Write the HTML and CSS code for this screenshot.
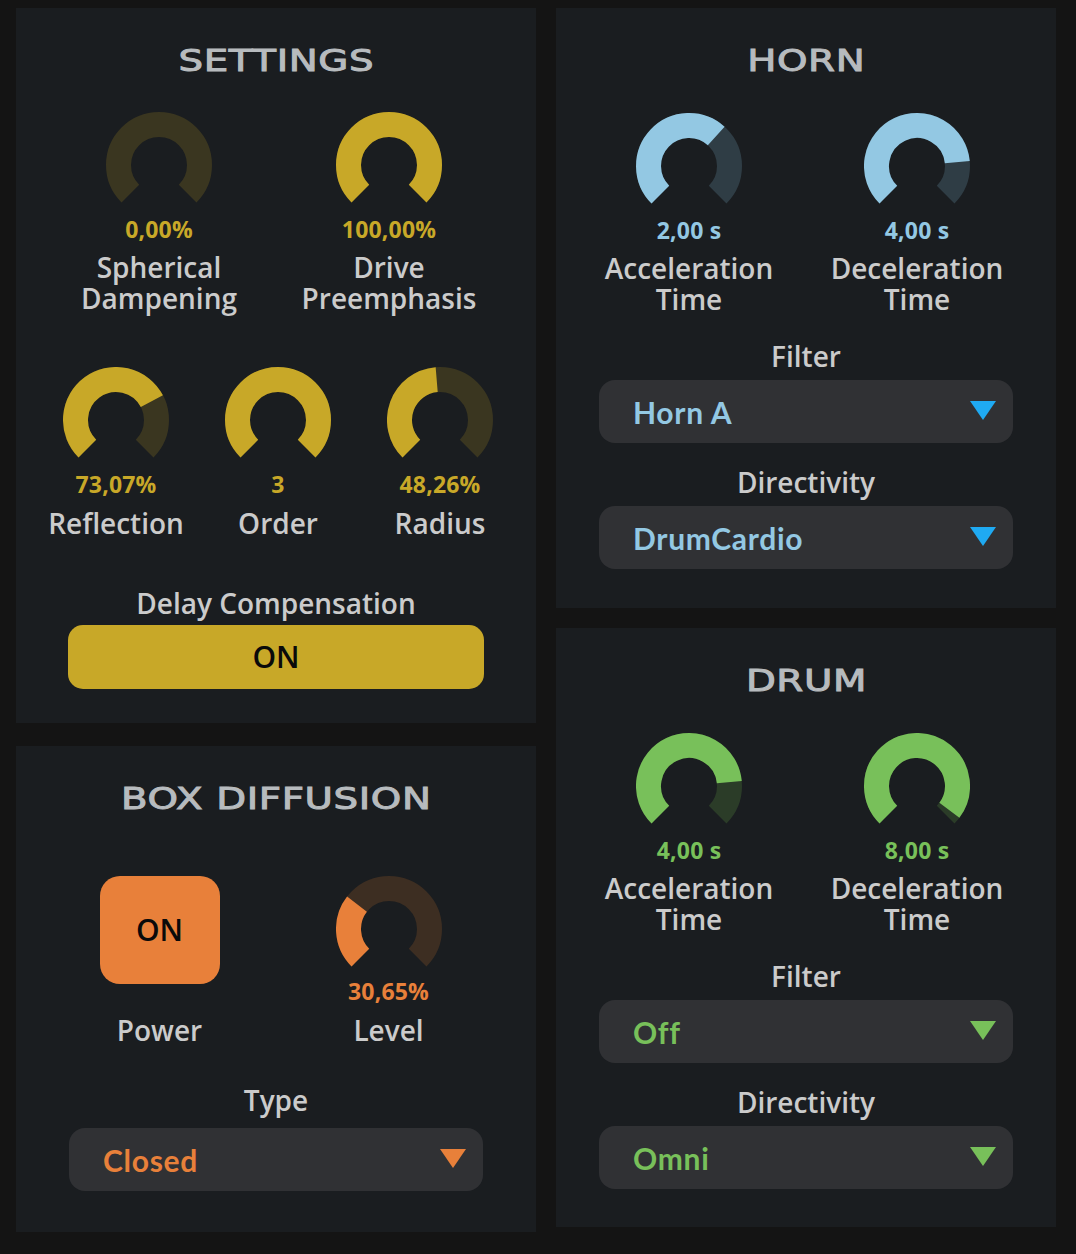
FILE: index.html
```html
<!DOCTYPE html>
<html lang="en">
<head>
<meta charset="utf-8">
<title>Plugin Settings</title>
<link rel="stylesheet" href="styles.css">
</head>
<body>
<div class="layout">
  <div class="column column-left">
    <section class="panel panel-settings theme-yellow">
      <h2 class="panel-title"><span>SETTINGS</span></h2>
      <div class="knob-row knob-row-2">
        <div class="knob-cell">
          <svg class="knob" viewBox="0 0 106 106"><path class="knob-track" d="M24.36 81.64A40.5 40.5 0 1 1 81.64 81.64"/></svg>
          <div class="value">0,00%</div>
          <div class="label">Spherical<br>Dampening</div>
        </div>
        <div class="knob-cell">
          <svg class="knob" viewBox="0 0 106 106"><path class="knob-track" d="M24.36 81.64A40.5 40.5 0 1 1 81.64 81.64"/><path class="knob-fill" d="M24.36 81.64A40.5 40.5 0 1 1 81.64 81.64"/></svg>
          <div class="value">100,00%</div>
          <div class="label">Drive<br>Preemphasis</div>
        </div>
      </div>
      <div class="knob-row knob-row-3">
        <div class="knob-cell">
          <svg class="knob" viewBox="0 0 106 106"><path class="knob-track" d="M24.36 81.64A40.5 40.5 0 1 1 81.64 81.64"/><path class="knob-fill" d="M24.36 81.64A40.5 40.5 0 1 1 88.86 34.18"/></svg>
          <div class="value">73,07%</div>
          <div class="label">Reflection</div>
        </div>
        <div class="knob-cell">
          <svg class="knob" viewBox="0 0 106 106"><path class="knob-track" d="M24.36 81.64A40.5 40.5 0 1 1 81.64 81.64"/><path class="knob-fill" d="M24.36 81.64A40.5 40.5 0 1 1 81.64 81.64"/></svg>
          <div class="value">3</div>
          <div class="label">Order</div>
        </div>
        <div class="knob-cell">
          <svg class="knob" viewBox="0 0 106 106"><path class="knob-track" d="M24.36 81.64A40.5 40.5 0 1 1 81.64 81.64"/><path class="knob-fill" d="M24.36 81.64A40.5 40.5 0 0 1 49.68 12.64"/></svg>
          <div class="value">48,26%</div>
          <div class="label">Radius</div>
        </div>
      </div>
      <div class="field-label field-label-delay">Delay Compensation</div>
      <button class="toggle-wide" type="button">ON</button>
    </section>

    <section class="panel panel-box theme-orange">
      <h2 class="panel-title"><span>BOX DIFFUSION</span></h2>
      <div class="box-grid">
        <button class="toggle-square" type="button">ON</button>
        <div class="knob-stack">
          <svg class="knob" viewBox="0 0 106 106"><path class="knob-track" d="M24.36 81.64A40.5 40.5 0 1 1 81.64 81.64"/><path class="knob-fill" d="M24.36 81.64A40.5 40.5 0 0 1 20.98 28.21"/></svg>
          <div class="value value-box">30,65%</div>
        </div>
        <div class="label label-box">Power</div>
        <div class="label label-box">Level</div>
      </div>
      <div class="field-label field-label-type">Type</div>
      <div class="dropdown">
        <span class="dropdown-text">Closed</span>
        <span class="dropdown-arrow"></span>
      </div>
    </section>
  </div>

  <div class="column column-right">
    <section class="panel panel-horn theme-blue">
      <h2 class="panel-title"><span>HORN</span></h2>
      <div class="knob-row knob-row-2 knob-row-right">
        <div class="knob-cell">
          <svg class="knob" viewBox="0 0 106 106"><path class="knob-track" d="M24.36 81.64A40.5 40.5 0 1 1 81.64 81.64"/><path class="knob-fill" d="M24.36 81.64A40.5 40.5 0 0 1 80.2 23.0"/></svg>
          <div class="value">2,00 s</div>
          <div class="label">Acceleration<br>Time</div>
        </div>
        <div class="knob-cell">
          <svg class="knob" viewBox="0 0 106 106"><path class="knob-track" d="M24.36 81.64A40.5 40.5 0 1 1 81.64 81.64"/><path class="knob-fill" d="M24.36 81.64A40.5 40.5 0 1 1 93.31 49.12"/></svg>
          <div class="value">4,00 s</div>
          <div class="label">Deceleration<br>Time</div>
        </div>
      </div>
      <div class="field-label field-label-filter">Filter</div>
      <div class="dropdown">
        <span class="dropdown-text">Horn A</span>
        <span class="dropdown-arrow"></span>
      </div>
      <div class="field-label field-label-dir">Directivity</div>
      <div class="dropdown">
        <span class="dropdown-text">DrumCardio</span>
        <span class="dropdown-arrow"></span>
      </div>
    </section>

    <section class="panel panel-drum theme-green">
      <h2 class="panel-title"><span>DRUM</span></h2>
      <div class="knob-row knob-row-2 knob-row-right">
        <div class="knob-cell">
          <svg class="knob" viewBox="0 0 106 106"><path class="knob-track" d="M24.36 81.64A40.5 40.5 0 1 1 81.64 81.64"/><path class="knob-fill" d="M24.36 81.64A40.5 40.5 0 1 1 93.31 49.12"/></svg>
          <div class="value">4,00 s</div>
          <div class="label">Acceleration<br>Time</div>
        </div>
        <div class="knob-cell">
          <svg class="knob" viewBox="0 0 106 106"><path class="knob-track" d="M24.36 81.64A40.5 40.5 0 1 1 81.64 81.64"/><path class="knob-fill" d="M24.36 81.64A40.5 40.5 0 1 1 85.39 77.32"/></svg>
          <div class="value">8,00 s</div>
          <div class="label">Deceleration<br>Time</div>
        </div>
      </div>
      <div class="field-label field-label-filter">Filter</div>
      <div class="dropdown">
        <span class="dropdown-text">Off</span>
        <span class="dropdown-arrow"></span>
      </div>
      <div class="field-label field-label-dir">Directivity</div>
      <div class="dropdown">
        <span class="dropdown-text">Omni</span>
        <span class="dropdown-arrow"></span>
      </div>
    </section>
  </div>
</div>
</body>
</html>
```

FILE: styles.css
```css
* {
  box-sizing: border-box;
}

html, body {
  margin: 0;
  padding: 0;
}

body {
  background: #141414;
  font-family: "Open Sans", "Noto Sans", sans-serif;
  color: #cbcbcb;
  width: 1076px;
  height: 1254px;
  overflow: hidden;
}

.layout {
  display: flex;
  gap: 20px;
  padding: 8px 20px 0 16px;
}

.column {
  display: flex;
  flex-direction: column;
}

.column-left {
  width: 520px;
  gap: 23px;
}

.column-right {
  width: 500px;
  gap: 20px;
}

.panel {
  background: #1a1d20;
  display: flex;
  flex-direction: column;
  align-items: center;
  padding-top: 36px;
}

.panel-settings {
  height: 715px;
}

.panel-box {
  height: 486px;
}

.panel-horn {
  height: 600px;
}

.panel-drum {
  height: 599px;
}

/* themes */
.theme-yellow { --accent: #c8a828; --track: #3a3620; }
.theme-orange { --accent: #e8803a; --track: #3d2e22; }
.theme-blue   { --accent: #93c8e3; --track: #2f3d45; --arrow: #1faaf2; }
.theme-green  { --accent: #78c05a; --track: #2b3c28; }

/* titles */
.panel-title {
  margin: 0;
  height: 32px;
  line-height: 32px;
  font-family: "DejaVu Sans", sans-serif;
  font-weight: normal;
  font-size: 31px;
  color: #b7bbbe;
  -webkit-text-stroke: 1px #b7bbbe;
  text-align: center;
  white-space: nowrap;
}

.panel-title span {
  display: inline-block;
  letter-spacing: 0.5px;
  transform: scaleX(1.25);
}

/* knobs */
.knob-row {
  display: grid;
  justify-content: center;
  width: 100%;
}

.knob-row-2 {
  grid-template-columns: 230px 230px;
  padding-right: 4px;
  margin-top: 36px;
}

.knob-row-3 {
  grid-template-columns: 162px 162px 162px;
  padding-left: 4px;
  margin-top: 53px;
}

.knob-row-right {
  grid-template-columns: 228px 228px;
  padding-right: 6px;
  margin-top: 37px;
}

.knob-cell,
.knob-stack {
  display: flex;
  flex-direction: column;
  align-items: center;
}

.knob {
  width: 106px;
  height: 106px;
  display: block;
}

.knob-track,
.knob-fill {
  fill: none;
  stroke-width: 25;
  stroke-linecap: butt;
}

.knob-track {
  stroke: var(--track);
}

.knob-fill {
  stroke: var(--accent);
}

.value {
  font-size: 23px;
  line-height: 22px;
  font-weight: 700;
  letter-spacing: 0.2px;
  color: var(--accent);
  white-space: nowrap;
}

.label {
  margin-top: 12px;
  font-size: 28px;
  line-height: 31px;
  font-weight: 600;
  color: #cbcbcb;
  text-align: center;
  white-space: nowrap;
}

.knob-row-3 .label {
  margin-top: 13px;
}

/* field labels */
.field-label {
  font-size: 28px;
  line-height: 31px;
  font-weight: 600;
  color: #cbcbcb;
  text-align: center;
}

.field-label-delay {
  margin-top: 49px;
}

.field-label-filter {
  margin-top: 26px;
}

.field-label-dir {
  margin-top: 24px;
}

.field-label-type {
  margin-top: 39px;
}

/* wide toggle */
.toggle-wide {
  margin-top: 6px;
  width: 416px;
  height: 64px;
  border: none;
  border-radius: 15px;
  background: var(--accent);
  color: #0a0a0a;
  font-family: "Open Sans", "Noto Sans", sans-serif;
  font-size: 30px;
  font-weight: 600;
  padding: 0;
  line-height: 1;
}

/* box diffusion */
.box-grid {
  display: grid;
  grid-template-columns: 229px 229px;
  justify-content: center;
  justify-items: center;
  align-items: start;
  width: 100%;
  padding-right: 4px;
  margin-top: 62px;
}

.toggle-square {
  width: 120px;
  height: 108px;
  border: none;
  border-radius: 20px;
  background: var(--accent);
  color: #0a0a0a;
  font-family: "Open Sans", "Noto Sans", sans-serif;
  font-size: 30px;
  font-weight: 600;
  padding: 0;
  line-height: 1;
}

.value-box {
  margin-top: -2px;
}

.label-box {
  margin-top: 13px;
}

/* dropdowns */
.dropdown {
  margin-top: 8px;
  width: 414px;
  height: 63px;
  border-radius: 16px;
  background: #303134;
  display: flex;
  align-items: center;
  justify-content: space-between;
  padding: 0 17px 0 34px;
}

.panel-box .dropdown {
  margin-top: 12px;
}

.dropdown-text {
  font-family: "Lato", "Noto Sans", sans-serif;
  font-weight: 700;
  font-size: 30px;
  letter-spacing: 0.7px;
  line-height: 1;
  color: var(--accent);
}

.dropdown-arrow {
  width: 0;
  height: 0;
  border-left: 13.5px solid transparent;
  border-right: 13.5px solid transparent;
  border-top: 19px solid var(--arrow, var(--accent));
  margin-top: -2px;
}
```
